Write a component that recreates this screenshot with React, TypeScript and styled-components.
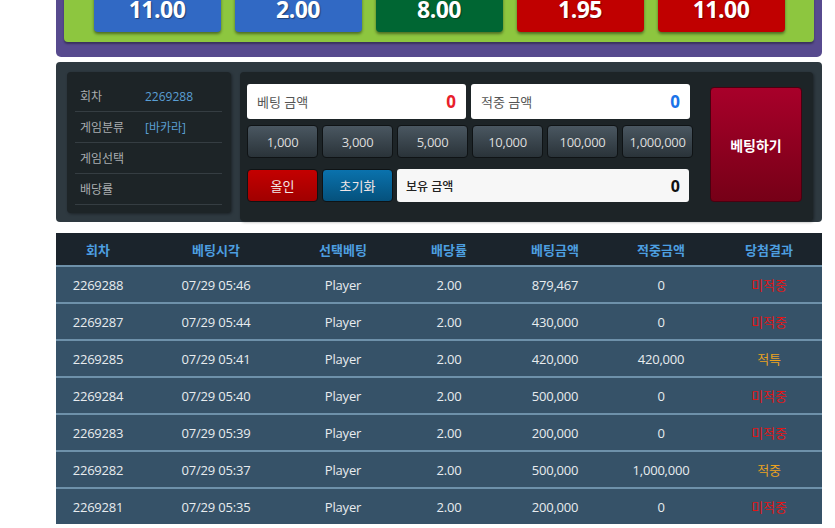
import React from "react";
import styled, { createGlobalStyle } from "styled-components";

const GlobalStyle = createGlobalStyle`
  html, body {
    margin: 0;
    padding: 0;
    background: #ffffff;
    overflow: hidden;
  }
  body {
    font-family: "Open Sans", "Noto Sans CJK KR", sans-serif;
  }
`;

type Tone = "blue" | "green" | "red";

const toneColors: Record<Tone, string> = {
  blue: "#3169c4",
  green: "#006633",
  red: "#c00000",
};

const odds: { value: string; tone: Tone }[] = [
  { value: "11.00", tone: "blue" },
  { value: "2.00", tone: "blue" },
  { value: "8.00", tone: "green" },
  { value: "1.95", tone: "red" },
  { value: "11.00", tone: "red" },
];

const info = [
  { label: "회차", value: "2269288" },
  { label: "게임분류", value: "[바카라]" },
  { label: "게임선택", value: "" },
  { label: "배당률", value: "" },
];

const chips = ["1,000", "3,000", "5,000", "10,000", "100,000", "1,000,000"];

type Result = "miss" | "hit" | "special";

const rows: [string, string, string, string, string, string, Result][] = [
  ["2269288", "07/29 05:46", "Player", "2.00", "879,467", "0", "miss"],
  ["2269287", "07/29 05:44", "Player", "2.00", "430,000", "0", "miss"],
  ["2269285", "07/29 05:41", "Player", "2.00", "420,000", "420,000", "special"],
  ["2269284", "07/29 05:40", "Player", "2.00", "500,000", "0", "miss"],
  ["2269283", "07/29 05:39", "Player", "2.00", "200,000", "0", "miss"],
  ["2269282", "07/29 05:37", "Player", "2.00", "500,000", "1,000,000", "hit"],
  ["2269281", "07/29 05:35", "Player", "2.00", "200,000", "0", "miss"],
];

const resultText: Record<Result, string> = {
  miss: "미적중",
  hit: "적중",
  special: "적특",
};

const headers = ["회차", "베팅시각", "선택베팅", "배당률", "베팅금액", "적중금액", "당첨결과"];
const colWidths = [84, 152, 102, 110, 102, 110, 106];

export default function App() {
  return (
    <>
      <GlobalStyle />
      <Page>
        <OddsPanel>
          <OddsInner>
            {odds.map((o, i) => (
              <OddsButton key={i} tone={o.tone}>
                {o.value}
              </OddsButton>
            ))}
          </OddsInner>
        </OddsPanel>

        <BetPanel>
          <InfoBox>
            {info.map((r) => (
              <InfoRow key={r.label}>
                <InfoLabel>{r.label}</InfoLabel>
                <InfoValue>{r.value}</InfoValue>
              </InfoRow>
            ))}
          </InfoBox>

          <ControlBox>
            <ControlColumn>
              <AmountRow>
                <AmountField>
                  <AmountLabel>베팅 금액</AmountLabel>
                  <AmountValue color="#e8202a">0</AmountValue>
                </AmountField>
                <AmountField>
                  <AmountLabel>적중 금액</AmountLabel>
                  <AmountValue color="#1a73e8">0</AmountValue>
                </AmountField>
              </AmountRow>
              <ChipRow>
                {chips.map((c) => (
                  <ChipButton key={c}>{c}</ChipButton>
                ))}
              </ChipRow>
              <ActionRow>
                <ActionButton variant="allin">올인</ActionButton>
                <ActionButton variant="reset">초기화</ActionButton>
                <BalanceField>
                  <BalanceLabel>보유 금액</BalanceLabel>
                  <BalanceValue>0</BalanceValue>
                </BalanceField>
              </ActionRow>
            </ControlColumn>
            <BetButton>베팅하기</BetButton>
          </ControlBox>
        </BetPanel>

        <Table>
          <colgroup>
            {colWidths.map((w, i) => (
              <col key={i} style={{ width: w }} />
            ))}
          </colgroup>
          <thead>
            <tr>
              {headers.map((h) => (
                <HeadCell key={h}>{h}</HeadCell>
              ))}
            </tr>
          </thead>
          <tbody>
            {rows.map((r) => (
              <BodyRow key={r[0]}>
                {r.slice(0, 6).map((v, i) => (
                  <BodyCell key={i}>{v}</BodyCell>
                ))}
                <ResultCell result={r[6]}>{resultText[r[6]]}</ResultCell>
              </BodyRow>
            ))}
          </tbody>
        </Table>
      </Page>
    </>
  );
}

const Page = styled.div`
  width: 766px;
  margin-left: 56px;
`;

const OddsPanel = styled.div`
  margin-top: -29px;
  padding: 8px 8px 15px;
  background: #574a8e;
  border-radius: 0 0 5px 5px;
`;

const OddsInner = styled.div`
  display: flex;
  justify-content: center;
  gap: 14px;
  padding: 8px 0 10px;
  background: #8dc63f;
  border-radius: 0 0 4px 4px;
  box-shadow: 0 2px 2px rgba(0, 0, 0, 0.35);
`;

const OddsButton = styled.div<{ tone: Tone }>`
  width: 127px;
  height: 45px;
  display: flex;
  align-items: center;
  justify-content: center;
  padding-bottom: 2px;
  box-sizing: border-box;
  background: ${(p) => toneColors[p.tone]};
  color: #ffffff;
  font-family: "Open Sans", sans-serif;
  font-weight: 700;
  font-size: 23px;
  letter-spacing: -0.5px;
  border-radius: 0 0 4px 4px;
  box-shadow: 0 2px 3px rgba(0, 0, 0, 0.45);
  text-shadow: 1px 1px 1px rgba(0, 0, 0, 0.4);
`;

const BetPanel = styled.div`
  margin-top: 5px;
  height: 160px;
  box-sizing: border-box;
  padding: 10px 9px 1px 11px;
  display: flex;
  align-items: flex-start;
  gap: 9px;
  background: #2e3940;
  border-radius: 4px;
`;

const InfoBox = styled.div`
  width: 165px;
  height: 141px;
  box-sizing: border-box;
  padding: 9px 9px 0 8px;
  background: #1d2427;
  border-radius: 4px;
  box-shadow: 1px 1px 3px rgba(0, 0, 0, 0.4);
`;

const InfoRow = styled.div`
  height: 30px;
  display: flex;
  align-items: center;
  border-bottom: 1px solid #353d42;
  font-size: 12px;
`;

const InfoLabel = styled.span`
  width: 65px;
  padding-left: 5px;
  color: #a9adb0;
`;

const InfoValue = styled.span`
  color: #5a9fd4;
`;

const ControlBox = styled.div`
  flex: 1;
  height: 149px;
  box-sizing: border-box;
  padding: 12px 11px 0 7px;
  display: flex;
  align-items: flex-start;
  background: #1d2427;
  border-radius: 4px;
  box-shadow: 1px 1px 3px rgba(0, 0, 0, 0.4);
`;

const ControlColumn = styled.div`
  width: 446px;
  display: flex;
  flex-direction: column;
`;

const AmountRow = styled.div`
  display: flex;
  gap: 5px;
`;

const AmountField = styled.div`
  width: 219px;
  height: 35px;
  box-sizing: border-box;
  padding: 0 10px;
  display: flex;
  align-items: center;
  justify-content: space-between;
  background: #ffffff;
  border-radius: 3px;
`;

const AmountLabel = styled.span`
  color: #555555;
  font-size: 13px;
`;

const AmountValue = styled.span<{ color: string }>`
  color: ${(p) => p.color};
  font-weight: 700;
  font-size: 17px;
`;

const ChipRow = styled.div`
  margin-top: 6px;
  display: flex;
  gap: 4px;
`;

const ChipButton = styled.div`
  width: 71px;
  height: 33px;
  box-sizing: border-box;
  display: flex;
  align-items: center;
  justify-content: center;
  background: linear-gradient(#4a5761, #2a3339);
  border: 1px solid #0f1315;
  border-radius: 4px;
  color: #dcdcdc;
  font-size: 13px;
  letter-spacing: -0.3px;
`;

const ActionRow = styled.div`
  margin-top: 11px;
  display: flex;
  gap: 4px;
`;

const ActionButton = styled.div<{ variant: "allin" | "reset" }>`
  width: 71px;
  height: 33px;
  box-sizing: border-box;
  display: flex;
  align-items: center;
  justify-content: center;
  background: ${(p) =>
    p.variant === "allin"
      ? "linear-gradient(#c40000, #a00000)"
      : "linear-gradient(#0a72ad, #05517c)"};
  border: 1px solid #0f1315;
  border-radius: 4px;
  color: #f2e6e6;
  font-size: 13px;
`;

const BalanceField = styled.div`
  width: 292px;
  height: 33px;
  box-sizing: border-box;
  padding: 0 9px 0 9px;
  display: flex;
  align-items: center;
  justify-content: space-between;
  background: #f7f7f7;
  border-radius: 3px;
`;

const BalanceLabel = styled.span`
  color: #222222;
  font-size: 12px;
  font-weight: 500;
`;

const BalanceValue = styled.span`
  color: #111111;
  font-weight: 700;
  font-size: 16px;
`;

const BetButton = styled.div`
  margin: 3px 0 0 17px;
  width: 92px;
  height: 115px;
  box-sizing: border-box;
  display: flex;
  align-items: center;
  justify-content: center;
  background: linear-gradient(#a8002a, #760017);
  border: 1px solid #4a0010;
  border-radius: 4px;
  color: #ffffff;
  font-weight: 700;
  font-size: 14px;
`;

const Table = styled.table`
  margin-top: 11px;
  width: 766px;
  table-layout: fixed;
  border-collapse: collapse;
  font-size: 13px;
`;

const HeadCell = styled.th`
  height: 32px;
  padding: 0;
  background: #1b242c;
  color: #4d9fe0;
  font-weight: 700;
  text-align: center;
`;

const BodyRow = styled.tr`
  background: #365268;
  border-top: 2px solid #6e91aa;
`;

const BodyCell = styled.td`
  height: 35px;
  padding: 0;
  color: #e8ecef;
  text-align: center;
  letter-spacing: -0.2px;
`;

const ResultCell = styled(BodyCell)<{ result: Result }>`
  color: ${(p) => (p.result === "miss" ? "#e31515" : "#eba21e")};
`;
